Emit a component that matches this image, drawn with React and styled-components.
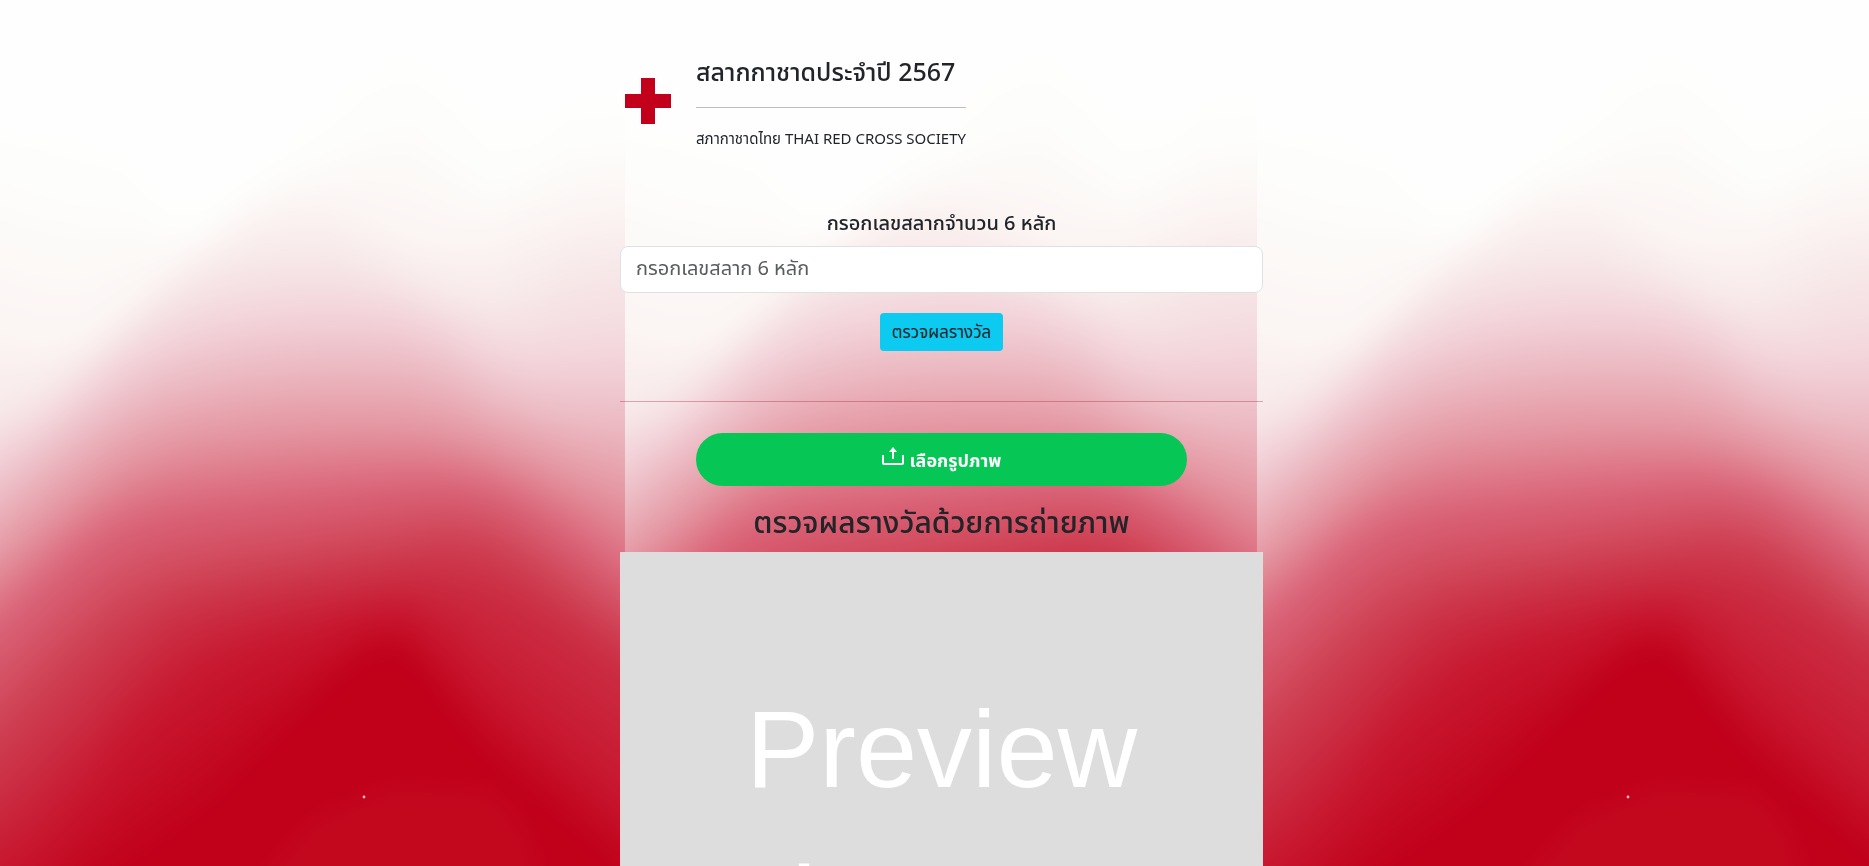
import React, { useId } from "react";
import styled, { createGlobalStyle } from "styled-components";

const GlobalStyle = createGlobalStyle`
  *, *::before, *::after { box-sizing: border-box; }
  body {
    margin: 0;
    background: #fefefe;
    color: #212529;
    font-family: "Noto Sans", "Noto Sans Thai", sans-serif;
    font-size: 16px;
    line-height: 24px;
  }
`;

/* Backdrop tile: contour heights at evenly spaced columns, one row per colour. */
const TILE_W = 632;
const TILE_H = 866;
const COLUMN_X = [0, 49, 90, 130, 171, 212, 253, 294, 335, 375, 416, 457, 498, 538, 579, 632];
const CONTOURS = [
  { color: [254, 254, 254], y: [120, 120, 125, 140, 190, 195, 175, 130, 90, 45, 30, 50, 95, 110, 80, 75] },
  { color: [253, 253, 251], y: [150, 165, 180, 190, 225, 232, 195, 170, 150, 120, 100, 140, 180, 165, 140, 135] },
  { color: [251, 244, 243], y: [330, 345, 340, 310, 275, 245, 218, 205, 202, 218, 238, 245, 240, 225, 212, 205] },
  { color: [247, 232, 232], y: [415, 392, 362, 330, 296, 273, 260, 255, 254, 264, 280, 296, 305, 292, 272, 262] },
  { color: [243, 215, 221], y: [446, 420, 387, 355, 332, 316, 308, 303, 301, 303, 310, 325, 346, 353, 348, 344] },
  { color: [236, 186, 195], y: [498, 460, 430, 404, 385, 374, 367, 362, 360, 360, 363, 375, 395, 408, 416, 419] },
  { color: [228, 150, 161], y: [558, 518, 486, 460, 443, 434, 428, 425, 423, 423, 424, 430, 442, 456, 472, 492] },
  { color: [218, 100, 120], y: [622, 580, 545, 521, 508, 501, 497, 493, 489, 485, 482, 482, 490, 508, 532, 572] },
  { color: [207, 65, 84], y: [725, 676, 637, 605, 585, 574, 566, 560, 553, 547, 540, 534, 540, 562, 592, 628] },
  { color: [202, 42, 64], y: [805, 762, 720, 676, 637, 618, 607, 598, 591, 585, 580, 582, 592, 612, 638, 675] },
  { color: [199, 22, 46], y: [870, 836, 792, 743, 704, 672, 652, 640, 628, 614, 612, 642, 685, 720, 752, 795] },
  { color: [193, 0, 26], y: [960, 920, 890, 865, 838, 810, 770, 730, 690, 655, 655, 712, 760, 792, 825, 872] },
];
const STEPS = 6;

const LAYERS = CONTOURS.slice(1).flatMap((next, i) => {
  const prev = CONTOURS[i];
  return Array.from({ length: STEPS }, (_, k) => {
    const t = (k + 1) / STEPS;
    const mix = (a, b) => Math.round(a + (b - a) * t);
    const ys = next.y.map((y, c) => mix(prev.y[c], y));
    const line = ys.map((y, c) => `L${COLUMN_X[c]} ${y}`).join(" ");
    const leftY = 2 * ys[0] - ys[1];
    const rightY = 2 * ys[15] - ys[14];
    return {
      fill: `rgb(${next.color.map((v, c) => mix(prev.color[c], v)).join(",")})`,
      d: `M-60 1100 L-49 ${leftY} ${line} L685 ${rightY} L700 1100Z`,
    };
  });
});

const Backdrop = styled.div`
  position: fixed;
  inset: 0;
  z-index: -1;
  display: flex;
  justify-content: center;
  padding-left: 13px;
  overflow: hidden;
`;

const TileSvg = styled.svg`
  flex: none;
  display: block;
  height: 100%;
  overflow: hidden;
`;

function Tile() {
  const soft = useId();
  return (
    <TileSvg viewBox={`0 0 ${TILE_W} ${TILE_H}`} aria-hidden="true">
      <defs>
        <filter
          id={soft}
          filterUnits="userSpaceOnUse"
          x="-60"
          y="-60"
          width="760"
          height="1000"
          colorInterpolationFilters="sRGB"
        >
          <feGaussianBlur stdDeviation="12" />
        </filter>
      </defs>
      <rect width={TILE_W} height={TILE_H} fill="#fefefe" />
      <g filter={`url(#${soft})`}>
        <rect x="-100" y="-100" width="900" height="1300" fill="#fefefe" />
        {LAYERS.map((layer, i) => (
          <path key={i} d={layer.d} fill={layer.fill} />
        ))}
        <path d="M250 900 L320 818 L400 785 L500 790 L535 830 L550 900Z" fill="#c3081e" />
      </g>
      <circle cx="371" cy="797" r="1.4" fill="#f6b8c0" />
    </TileSvg>
  );
}

const Page = styled.div`
  display: flex;
  justify-content: center;
  height: 100vh;
  padding-left: 14px;
`;

const Column = styled.main`
  display: flex;
  flex-direction: column;
  width: 100%;
  max-width: 643px;
`;

const Header = styled.header`
  display: flex;
  align-items: center;
  gap: 24px;
  padding: 51px 0 56px 4px;
`;

const Cross = styled.svg`
  flex: none;
  width: 48px;
  height: 48px;
`;

const Title = styled.h1`
  margin: 0;
  font-size: 25px;
  font-weight: 500;
  line-height: 40px;
`;

const Rule = styled.hr`
  width: 100%;
  margin: 16px 0;
  border: 0;
  border-top: 1px solid ${(p) => p.$color};
  opacity: ${(p) => p.$opacity};
`;

const Subtitle = styled.p`
  margin: 0;
  font-size: 15px;
  line-height: 28px;
`;

const Form = styled.form`
  display: flex;
  flex-direction: column;
  align-items: center;
  padding-bottom: 34px;
`;

const Label = styled.label`
  margin-bottom: 8px;
  font-size: 20px;
  font-weight: 500;
  line-height: 30px;
`;

const NumberInput = styled.input`
  width: 100%;
  height: 47px;
  padding: 4px 15px 8px;
  border: 1px solid #dee2e6;
  border-radius: 8px;
  background: #fff;
  color: #212529;
  font: inherit;
  font-size: 20px;
  &::placeholder { color: #595c5f; opacity: 1; }
`;

const CheckButton = styled.button`
  height: 38px;
  margin-top: 20px;
  padding: 0 12px;
  border: 0;
  border-radius: 4px;
  background: #0dcaf0;
  color: #212529;
  font: inherit;
  font-size: 17px;
`;

const UploadButton = styled.button`
  height: 53px;
  margin: 15px 76px 0;
  border: 0;
  border-radius: 27px;
  background: #06c755;
  color: #fff;
  font: inherit;
  font-size: 18px;
  font-weight: 700;
`;

const UploadIcon = styled.svg`
  width: 22px;
  height: 20px;
  margin-right: 6px;
`;

const Heading = styled.h2`
  margin: 15px 0 9px;
  font-size: 30px;
  font-weight: 500;
  line-height: 42px;
  text-align: center;
`;

const PreviewPanel = styled.div`
  flex: 1;
  min-height: 0;
  overflow: hidden;
  padding-top: 121px;
  background: #ddd;
  color: #fff;
  font-family: "Liberation Sans", sans-serif;
  font-size: 110px;
  line-height: 152px;
  text-align: center;
`;

const PreviewLine = styled.div``;

export default function App() {
  return (
    <>
      <GlobalStyle />
      <Backdrop>
        {[0, 1, 2, 3, 4].map((n) => (
          <Tile key={n} />
        ))}
      </Backdrop>
      <Page>
        <Column>
          <Header>
            <Cross viewBox="0 0 48 48" role="img" aria-label="Red Cross">
              <path d="M17 0h14v16h16v14H31v16H17V30H1V16h16z" fill="#c3001b" />
            </Cross>
            <div>
              <Title>สลากกาชาดประจำปี 2567</Title>
              <Rule $color="#5b1a2b" $opacity={0.3} />
              <Subtitle>สภากาชาดไทย THAI RED CROSS SOCIETY</Subtitle>
            </div>
          </Header>
          <Form onSubmit={(e) => e.preventDefault()}>
            <Label htmlFor="ticket">กรอกเลขสลากจำนวน 6 หลัก</Label>
            <NumberInput id="ticket" type="text" placeholder="กรอกเลขสลาก 6 หลัก" maxLength={6} />
            <CheckButton type="submit">ตรวจผลรางวัล</CheckButton>
          </Form>
          <Rule $color="#a0202f" $opacity={0.35} />
          <UploadButton type="button">
            <UploadIcon viewBox="0 0 22 20" aria-hidden="true">
              <path d="M1 8v8q0 1 1 1h18q1 0 1-1V8M11 12V4" fill="none" stroke="#fff" strokeWidth="2" />
              <path d="M11 0l4 5H7z" fill="#fff" />
            </UploadIcon>
            เลือกรูปภาพ
          </UploadButton>
          <Heading>ตรวจผลรางวัลด้วยการถ่ายภาพ</Heading>
          <PreviewPanel>
            <PreviewLine>Preview</PreviewLine>
            <PreviewLine>Image</PreviewLine>
          </PreviewPanel>
        </Column>
      </Page>
    </>
  );
}
